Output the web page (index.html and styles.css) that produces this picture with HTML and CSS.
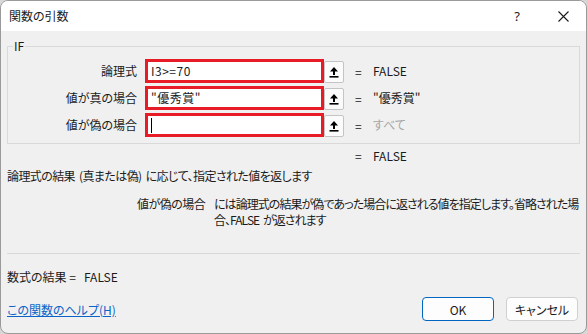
FILE: index.html
```
<!DOCTYPE html>
<html lang="ja">
<head>
<meta charset="utf-8">
<title>関数の引数</title>
<link rel="stylesheet" href="styles.css">
</head>
<body>
<div class="window">
  <div class="titlebar">
    <span class="title">関数の引数</span>
    <span class="cap help">?</span>
    <span class="cap close"><svg width="11" height="11" viewBox="0 0 11 11"><path d="M0.5 0.5 L10.5 10.5 M10.5 0.5 L0.5 10.5" stroke="#1a1a1a" stroke-width="1.1" fill="none"/></svg></span>
  </div>
  <div class="content">
    <fieldset class="args">
      <legend>IF</legend>
      <div class="row">
        <span class="label">論理式</span>
        <span class="input">I3&gt;=70</span>
        <span class="collapse"><svg width="10" height="11" viewBox="0 0 10 11"><path d="M5 0 L9 4.5 L6 4.5 L6 8 L4 8 L4 4.5 L1 4.5 Z" fill="#000"/><rect x="0.5" y="9" width="9" height="1.6" fill="#000"/></svg></span>
        <span class="eq">=</span>
        <span class="val">FALSE</span>
      </div>
      <div class="row">
        <span class="label">値が真の場合</span>
        <span class="input">"優秀賞"</span>
        <span class="collapse"><svg width="10" height="11" viewBox="0 0 10 11"><path d="M5 0 L9 4.5 L6 4.5 L6 8 L4 8 L4 4.5 L1 4.5 Z" fill="#000"/><rect x="0.5" y="9" width="9" height="1.6" fill="#000"/></svg></span>
        <span class="eq">=</span>
        <span class="val">"優秀賞"</span>
      </div>
      <div class="row">
        <span class="label">値が偽の場合</span>
        <span class="input"><span class="caret"></span></span>
        <span class="collapse"><svg width="10" height="11" viewBox="0 0 10 11"><path d="M5 0 L9 4.5 L6 4.5 L6 8 L4 8 L4 4.5 L1 4.5 Z" fill="#000"/><rect x="0.5" y="9" width="9" height="1.6" fill="#000"/></svg></span>
        <span class="eq">=</span>
        <span class="val muted">すべて</span>
      </div>
    </fieldset>
    <div class="result"><span class="eq">=</span><span class="val">FALSE</span></div>
    <p class="desc">論理式の結果 (真または偽) に応じて、指定された値を返します</p>
    <div class="argdesc">
      <span class="argname">値が偽の場合</span>
      <span class="argtext">には論理式の結果が偽であった場合に返される値を指定します。省略された場<br>合、FALSE が返されます</span>
    </div>
    <div class="sep"></div>
    <div class="formula">数式の結果 =&nbsp;&nbsp; FALSE</div>
    <div class="footer">
      <a class="helplink" href="#">この関数のヘルプ(H)</a>
      <div class="buttons">
        <button class="btn primary">OK</button>
        <button class="btn">キャンセル</button>
      </div>
    </div>
  </div>
</div>
</body>
</html>
```
FILE: styles.css
```
html, body {
  margin: 0;
  padding: 0;
  background: #d8d8d8;
}
body {
  font-family: "Noto Sans CJK JP", "Noto Sans", sans-serif;
  font-size: 12px;
  font-feature-settings: "palt";
  color: #1a1a1a;
}
.window {
  width: 587px;
  height: 334px;
  box-sizing: border-box;
  border: 1px solid #9a9a9a;
  border-radius: 8px;
  overflow: hidden;
  background: #f0f0f0;
  display: flex;
  flex-direction: column;
}
.titlebar {
  height: 30px;
  background: #ffffff;
  display: flex;
  align-items: center;
  padding-left: 8px;
  flex: none;
}
.title {
  font-size: 12px;
  line-height: 16px;
}
.cap {
  width: 46px;
  height: 30px;
  display: flex;
  align-items: center;
  justify-content: center;
}
.help {
  margin-left: auto;
  font-family: "Noto Sans", sans-serif;
  font-size: 13px;
}
.content {
  flex: 1;
  padding: 0 6px;
  display: flex;
  flex-direction: column;
}
.args {
  margin: 7px 0 0 0;
  padding: 5px 0 6px 0;
  border: 1px solid #d9d9d9;
  display: flex;
  flex-direction: column;
  gap: 3px;
}
.args legend {
  margin-left: 5px;
  padding: 0 1px;
  font-size: 12px;
  line-height: 16px;
}
.row {
  display: flex;
  align-items: center;
  height: 24px;
}
.label {
  width: 129px;
  text-align: right;
  margin-right: 8px;
  line-height: 16px;
}
.input {
  width: 179px;
  height: 24px;
  box-sizing: border-box;
  border: 3px solid #e81c27;
  background: #fff;
  padding-left: 3px;
  display: flex;
  align-items: center;
  line-height: 16px;
  letter-spacing: 0.5px;
}
.caret {
  display: block;
  width: 1px;
  height: 15px;
  background: #000;
}
.collapse {
  width: 20px;
  height: 22px;
  box-sizing: border-box;
  border: 1px solid #c4c4c4;
  border-radius: 2px;
  background: #fbfbfb;
  display: flex;
  align-items: center;
  justify-content: center;
  margin-top: 2px;
}
.eq {
  margin-left: 11px;
  width: 18px;
}
.val {
  line-height: 16px;
}
.muted {
  color: #a6a6a6;
}
.result {
  display: flex;
  padding-left: 348px;
  margin-top: 4px;
  line-height: 16px;
}
.result .eq {
  margin-left: 0;
}
.desc {
  margin: 4px 0 0 0;
  line-height: 16px;
  letter-spacing: -0.6px;
  word-spacing: 2px;
}
.argdesc {
  display: flex;
  margin-top: 12px;
  padding-left: 130px;
  line-height: 16px;
}
.argname {
  flex: none;
  white-space: nowrap;
  width: 77px;
  letter-spacing: -0.5px;
}
.argtext {
  white-space: nowrap;
  letter-spacing: -0.95px;
  word-spacing: 2px;
}
.sep {
  height: 1px;
  background: #d9d9d9;
  margin: 25px 0 0 0;
  width: 573px;
}
.formula {
  margin-top: 15px;
  line-height: 16px;
}
.footer {
  display: flex;
  align-items: center;
  margin-top: 12px;
}
.helplink {
  color: #0a64c8;
  text-decoration: underline;
  line-height: 16px;
  margin-top: 2px;
}
.buttons {
  margin-left: auto;
  display: flex;
  gap: 12px;
  margin-right: 2px;
}
.btn {
  width: 72px;
  height: 24px;
  box-sizing: border-box;
  border: 1px solid #d0d0d0;
  border-radius: 4px;
  background: #fdfdfd;
  font-family: "Noto Sans CJK JP", "Noto Sans", sans-serif;
  font-feature-settings: "palt";
  font-size: 12px;
  color: #1a1a1a;
  padding: 0;
}
.btn.primary {
  border-color: #0067c0;
}
```
